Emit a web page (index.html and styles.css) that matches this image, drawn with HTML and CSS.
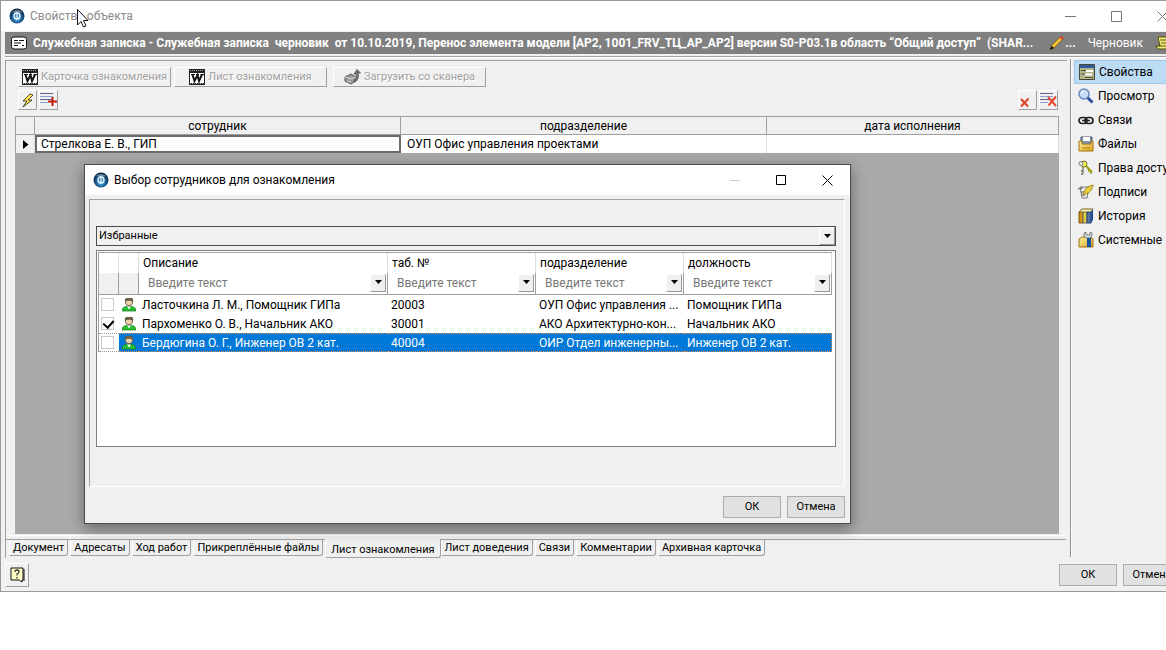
FILE: index.html
```html
<!DOCTYPE html>
<html lang="ru">
<head>
<meta charset="utf-8">
<title>Свойства объекта</title>
<link rel="stylesheet" href="styles.css">
</head>
<body>
<svg class="defs" width="0" height="0" aria-hidden="true">
  <defs>
    <radialGradient id="globe" cx="50%" cy="65%" r="60%">
      <stop offset="0" stop-color="#6fc4f4"/><stop offset=".5" stop-color="#1d639c"/><stop offset="1" stop-color="#0c2238"/>
    </radialGradient>
    <linearGradient id="gold" x1="0" y1="0" x2="1" y2="1">
      <stop offset="0" stop-color="#fff3a0"/><stop offset="1" stop-color="#d9a21c"/>
    </linearGradient>
    <symbol id="i-app" viewBox="0 0 16 16">
      <circle cx="8" cy="8" r="7.5" fill="url(#globe)"/>
      <path d="M3 4Q8 0 13 4Q8 6 3 4" fill="#8ea9c0" opacity=".7"/>
      <circle cx="8" cy="8" r="3" fill="none" stroke="#e4f5ff" stroke-width="1.4"/>
      <path d="M8 4.500v7" stroke="#e4f5ff" stroke-width="1.2"/>
    </symbol>
    <symbol id="i-word" viewBox="0 0 16 16">
      <path d="M0 0h16v16H0z" fill="#222"/>
      <path d="M1 4h14v10H1z" fill="#fff"/>
      <path d="M1 1.500h14M1 14.500h14" stroke="#aaa" stroke-dasharray="1 1"/>
      <path d="M2 5.500h4M7 5.500h3M11.500 5.500H15" stroke="#111"/>
      <path d="M3.500 5.500L5.500 12 8.500 6l1.500 6 3-6.500" fill="none" stroke="#111" stroke-width="2"/>
    </symbol>
    <symbol id="i-person" viewBox="0 0 14 15">
      <path d="M0 14c0-3 2-4 4-4.500h6c2 .5 4 1.500 4 4.500z" fill="#22c02c" stroke="#187a20" stroke-width=".7"/>
      <path d="M5 9.500l2 3 2-3" fill="#fff"/>
      <circle cx="7" cy="5" r="3.700" fill="#ecd3ac" stroke="#594b35" stroke-width=".8"/>
      <path d="M3 4.500C2 1 5 .5 7 1.500 10-.5 12 2 11 5 9 4 7 3 3 4.500z" fill="#6c6048"/>
    </symbol>
    <symbol id="i-down" viewBox="0 0 8 5"><path d="M1 0h7L4.500 4z" fill="#000"/></symbol>
    <symbol id="i-lines" viewBox="0 0 16 16">
      <path d="M0 1.500h13M0 7.500h13" stroke="#5f6488"/><path d="M0 4.500h13M0 10.500h8" stroke="#8da0cf"/>
    </symbol>
  </defs>
</svg>

<main class="window">
  <header class="titlebar">
    <svg class="app-icon"><use href="#i-app"/></svg>
    <h1 class="titlebar-text">Свойства объекта</h1>
    <div class="win-controls">
      <button type="button" aria-label="Свернуть"><svg width="11" height="11"><path d="M0 5.500h11" stroke="#777"/></svg></button>
      <button type="button" aria-label="Развернуть"><svg width="11" height="11"><path d="M.5.5h10v10H.5z" fill="none" stroke="#777"/></svg></button>
      <button type="button" aria-label="Закрыть"><svg width="11" height="11"><path d="M.5.5l10 10M10.500.5l-10 10" stroke="#777"/></svg></button>
    </div>
    <svg class="pointer" width="12" height="19" aria-hidden="true"><path d="M.5.5v15.500l3.500-3.500 2.500 5.500 2.500-1-2.500-5.500h4.500z" fill="#fff" stroke="#111"/></svg>
  </header>

  <div class="docbar">
    <svg width="16" height="14" viewBox="0 0 16 14"><rect x=".5" y="1" width="15" height="12" rx="2.500" fill="#fff" stroke="#111"/><path d="M3 4.500h4M8 4.500h5M3 7h7M3 9.500h4M11 9.500h2" stroke="#111"/></svg>
    <strong class="docbar-title">Служебная записка - Служебная записка&nbsp; черновик&nbsp; от 10.10.2019, Перенос элемента модели [АР2, 1001_FRV_ТЦ_АР_АР2] версии S0-P03.1в область “Общий доступ”&nbsp; (SHAR...</strong>
    <span class="docbar-edit"><svg width="16" height="16" viewBox="0 0 16 16"><path d="M1 15l2-5L12 1l3 2-9 9z" fill="#f1c232" stroke="#6b4b12" stroke-width=".8"/><path d="M12 1l3 2-2 2-3-2z" fill="#d55044"/><path d="M1 15l1.500-4L5 13z" fill="#111"/></svg>...</span>
    <span class="docbar-state">Черновик</span>
    <svg class="docbar-scroll" width="16" height="14" viewBox="0 0 16 14"><path d="M3 1h10v9h2v3H3l-2-3h4z" fill="#f4ee73" stroke="#544f12"/><path d="M5 4h6M6 7h5M4 10h8" stroke="#544f12"/></svg>
  </div>

  <div class="workspace">
    <section class="pane">
      <div class="toolbar">
        <button class="tool wide" type="button" disabled><svg width="16" height="16"><use href="#i-word"/></svg><span>Карточка ознакомления</span></button>
        <button class="tool wide" type="button" disabled><svg width="16" height="16"><use href="#i-word"/></svg><span>Лист ознакомления</span></button>
        <button class="tool wide scan" type="button" disabled><svg width="17" height="16" viewBox="0 0 17 16"><path d="M1 8l6-3 5 3v4l-5 3-6-3z" fill="#999" stroke="#555"/><path d="M1 8l6 2 5-2M3 12l4 1" fill="none" stroke="#ddd"/><path d="M10 11c3-1 3-3 2-6h-2l3-4.500L16.500 4H14c1 4 0 7-3 9z" fill="#777" stroke="#444" stroke-width=".7"/></svg><span>Загрузить со сканера</span></button>
      </div>
      <div class="toolbar small">
        <button class="tool" type="button" aria-label="Обновить"><svg width="14" height="15" viewBox="0 0 14 15"><path d="M9 1L2 8h4l-4 6 9-7H7l5-5z" fill="#ffe75c" stroke="#3e3819" stroke-width=".9"/></svg></button>
        <button class="tool" type="button" aria-label="Добавить"><svg width="17" height="16" viewBox="0 0 17 16"><use href="#i-lines" width="16" height="16"/><path d="M12.500 5v9M8 9.500h9" stroke="#c41808" stroke-width="2"/></svg></button>
        <span class="spacer"></span>
        <button class="tool" type="button" aria-label="Удалить"><svg width="17" height="16" viewBox="0 0 17 16"><path d="M2 7l7 7.500M9.500 6.500L2 14.500" stroke="#dd4325" stroke-width="2"/></svg></button>
        <button class="tool" type="button" aria-label="Удалить все"><svg width="17" height="16" viewBox="0 0 17 16"><use href="#i-lines" width="16" height="16"/><path d="M8 5l8 9M16 4.500l-7.500 9" stroke="#e64b2d" stroke-width="2"/></svg></button>
      </div>
      <div class="grid-area">
        <table class="grid">
          <colgroup><col class="c-mark"><col class="c-main"><col class="c-main"><col></colgroup>
          <thead><tr><th></th><th>сотрудник</th><th>подразделение</th><th>дата исполнения</th></tr></thead>
          <tbody><tr><td class="mark"><svg width="6" height="9"><path d="M0 0v9l5.500-4.500z"/></svg></td><td class="focus">Стрелкова Е. В., ГИП</td><td>ОУП Офис управления проектами</td><td></td></tr></tbody>
        </table>
      </div>
      <nav class="tabs">
        <button type="button">Документ</button><button type="button">Адресаты</button><button type="button">Ход работ</button><button type="button">Прикреплённые файлы</button><button type="button" class="active">Лист ознакомления</button><button type="button">Лист доведения</button><button type="button">Связи</button><button type="button">Комментарии</button><button type="button">Архивная карточка</button>
      </nav>
    </section>

    <nav class="side">
      <a class="current" href="#props"><svg viewBox="0 0 16 16"><path d="M.5.5h15v15H.5z" fill="#b4b489" stroke="#46463a"/><path d="M1 2.500h14" stroke="#315e9b" stroke-width="3"/><path d="M2 6.500h5M2 10h4M6 13.500h8" stroke="#55553f"/><path d="M7 7h7M6 10.500h7" stroke="#fff" stroke-width="2"/></svg>Свойства</a>
      <a href="#view"><svg viewBox="0 0 16 16"><path d="M9.500 9.500l5 5" stroke="#2b50a0" stroke-width="3"/><circle cx="6" cy="6" r="5" fill="#c8dcf8" stroke="#6682bc" stroke-width="1.400"/><path d="M3 6q0-3 3-3" stroke="#fff" fill="none"/></svg>Просмотр</a>
      <a href="#links"><svg viewBox="0 0 16 16"><rect x="1" y="5.500" width="8" height="6" rx="3" fill="none" stroke="#222" stroke-width="1.700"/><rect x="7" y="5.500" width="8" height="6" rx="3" fill="none" stroke="#222" stroke-width="1.700"/><path d="M4 8.500h8" stroke="#222" stroke-width="1.500"/></svg>Связи</a>
      <a href="#files"><svg viewBox="0 0 16 16"><path d="M3 1h11v9H3z" fill="#7993b7" stroke="#465269"/><path d="M5 1h7v4H5z" fill="#fff"/><path d="M1 5h3v3h9V5h2v10H1z" fill="url(#gold)" stroke="#a37412"/><path d="M4 12h8" stroke="#b78112"/></svg>Файлы</a>
      <a href="#rights"><svg viewBox="0 0 16 16"><path d="M8 6l6 6M12 10l-2 1M14 12l-2 1" stroke="#a1a018" stroke-width="2"/><path d="M5 6v8M5 11H3M5 14H3" stroke="#77776a" stroke-width="1.300"/><circle cx="6" cy="4" r="3" fill="#f2ee68" stroke="#77701e"/><circle cx="3" cy="3.500" r="2" fill="#eee" stroke="#777"/></svg>Права доступа</a>
      <a href="#signs"><svg viewBox="0 0 16 16"><path d="M2 3h9l-2 11H4z" fill="#eee" stroke="#777"/><path d="M0 5l5-1M3 8h5M4 11h3" stroke="#555"/><path d="M5 11c1-6 5-9 10-10-1 5-3 8-8 9z" fill="#e6cd3c" stroke="#8b751b" stroke-width=".8"/></svg>Подписи</a>
      <a href="#history"><svg viewBox="0 0 16 16"><path d="M1 4l3-3h11l-2 3" fill="#fff5b0" stroke="#776021"/><path d="M1 4h4v11H1z" fill="#d39614" stroke="#765211"/><path d="M5 4h4v11H5z" fill="#e4ce42" stroke="#666"/><path d="M9 4h4v11H9z" fill="#5174a5" stroke="#293f65"/><path d="M13 4l2-3v11l-2 3z" fill="#1c4d9b"/></svg>История</a>
      <a href="#system"><svg viewBox="0 0 16 16"><path d="M1 7l3-2h9l2 2v8H1z" fill="url(#gold)" stroke="#9d721a"/><path d="M6 1l2-1v3h4V0l2 1v3l-2 2H8L6 4z" fill="#d9e2e8" stroke="#555" stroke-width=".7"/><path d="M9 6h4v9H9z" fill="#1554a5"/></svg>Системные</a>
    </nav>
  </div>

  <footer class="footer">
    <button class="help" type="button" aria-label="Справка"><svg width="15" height="16" viewBox="0 0 15 16"><path d="M1 1h12v12h-1v2l-3-2H1z" fill="#ffffc5" stroke="#111"/><path d="M14 2v12" stroke="#111"/><path d="M5 5q0-2 2-2t2 2q0 1-2 2v1.500M7 10v1.500" fill="none" stroke="#333" stroke-width="1.300"/></svg></button>
    <span class="spacer"></span>
    <button class="btn" type="button">ОК</button>
    <button class="btn" type="button">Отмена</button>
  </footer>

  <section class="dialog" role="dialog" aria-labelledby="dlg-title">
    <header class="dialog-title">
      <svg class="app-icon"><use href="#i-app"/></svg>
      <h2 id="dlg-title">Выбор сотрудников для ознакомления</h2>
      <div class="win-controls">
        <button type="button" aria-label="Свернуть" disabled><svg width="11" height="11"><path d="M0 5.500h10" stroke="#ccc"/></svg></button>
        <button type="button" aria-label="Развернуть"><svg width="11" height="11"><path d="M.5.5h9v9H.5z" fill="none" stroke="#000"/></svg></button>
        <button type="button" aria-label="Закрыть"><svg width="11" height="11"><path d="M.5.5l10 10M10.500.5l-10 10" stroke="#000"/></svg></button>
      </div>
    </header>
    <div class="dialog-body">
      <div class="combo">
        <select aria-label="Список сотрудников"><option>Избранные</option></select>
        <span class="drop"><svg width="8" height="5"><use href="#i-down"/></svg></span>
      </div>
      <div class="list">
        <table class="people">
          <colgroup><col class="p-check"><col class="p-icon"><col class="p-name"><col class="p-num"><col class="p-num"><col class="p-num"></colgroup>
          <thead>
            <tr class="heads"><th></th><th></th><th>Описание</th><th>таб. №</th><th>подразделение</th><th>должность</th></tr>
            <tr class="filters">
              <td class="blank"></td><td class="blank"></td>
              <td><div class="filter"><input type="text" aria-label="Описание" placeholder="Введите текст"><button class="drop" type="button" aria-label="Выбрать описание"><svg width="8" height="5"><use href="#i-down"/></svg></button></div></td>
              <td><div class="filter"><input type="text" aria-label="таб. №" placeholder="Введите текст"><button class="drop" type="button" aria-label="Выбрать номер"><svg width="8" height="5"><use href="#i-down"/></svg></button></div></td>
              <td><div class="filter"><input type="text" aria-label="подразделение" placeholder="Введите текст"><button class="drop" type="button" aria-label="Выбрать подразделение"><svg width="8" height="5"><use href="#i-down"/></svg></button></div></td>
              <td><div class="filter"><input type="text" aria-label="должность" placeholder="Введите текст"><button class="drop" type="button" aria-label="Выбрать должность"><svg width="8" height="5"><use href="#i-down"/></svg></button></div></td>
            </tr>
          </thead>
          <tbody>
            <tr><td class="check"><input type="checkbox" aria-label="Ласточкина Л. М."></td><td class="face"><svg width="14" height="15"><use href="#i-person"/></svg></td><td>Ласточкина Л. М., Помощник ГИПа</td><td>20003</td><td>ОУП Офис управления ...</td><td>Помощник ГИПа</td></tr>
            <tr><td class="check"><input type="checkbox" aria-label="Пархоменко О. В." checked></td><td class="face"><svg width="14" height="15"><use href="#i-person"/></svg></td><td>Пархоменко О. В., Начальник АКО</td><td>30001</td><td>АКО Архитектурно-кон...</td><td>Начальник АКО</td></tr>
            <tr class="selected"><td class="check"><input type="checkbox" aria-label="Бердюгина О. Г."></td><td class="face"><svg width="14" height="15"><use href="#i-person"/></svg></td><td>Бердюгина О. Г., Инженер ОВ 2 кат.</td><td>40004</td><td>ОИР Отдел инженерны...</td><td>Инженер ОВ 2 кат.</td></tr>
          </tbody>
        </table>
      </div>
    </div>
    <footer class="dialog-foot">
      <button class="btn" type="button">ОК</button>
      <button class="btn" type="button">Отмена</button>
    </footer>
  </section>
</main>
</body>
</html>
```
FILE: styles.css
```css
* { box-sizing: border-box; }
body { margin: 0; background: #fff; color: #000; font: 12px/16px Roboto, "Noto Sans", sans-serif; overflow-x: hidden; }
button, input, select { font: inherit; color: inherit; margin: 0; padding: 0; border-radius: 0; }
h1, h2 { margin: 0; font-size: 12px; font-weight: 400; }
svg { display: block; flex: none; }
.defs { position: absolute; }
.spacer { flex: 1; }

.window { position: relative; overflow: hidden; background: #f0f0f0; border: solid #999; border-width: 1px 0 1px 1px; }
.titlebar { position: relative; display: flex; align-items: center; height: 30px; padding-left: 8px; gap: 5px; background: #fff; }
.titlebar-text { color: #8b8b8b; }
.app-icon { width: 16px; height: 16px; }
.win-controls { display: flex; margin-left: auto; }
.win-controls button { display: flex; justify-content: center; width: 46px; border: 0; background: none; }
.titlebar .win-controls { margin-right: -19px; }
.pointer { position: absolute; left: 76px; top: 8px; }

.docbar { display: flex; align-items: center; height: 22px; margin: 1px 0 2px 4px; padding-left: 6px; background: #808080; color: #fff; white-space: nowrap; }
.docbar-title { margin: 0 16px 0 6px; }
.docbar-edit { display: flex; font-weight: 700; }
.docbar-state { margin-left: auto; margin-right: 12px; }
.docbar-scroll { margin-right: -5px; }

.workspace { display: flex; margin-left: 4px; padding-top: 2px; border-top: 1px solid #a0a0a0; box-shadow: inset 0 1px #fff; }
.pane { flex: 1; min-width: 0; margin: 1px 3px 0 0; border: solid #a0a0a0; border-width: 1px 0 0 1px; padding-top: 6px; }
.toolbar { display: flex; gap: 3px; padding: 0 9px 0 12px; margin-bottom: 3px; }
.toolbar.small { margin-bottom: 6px; gap: 2px; }
.tool { display: flex; align-items: center; justify-content: center; gap: 3px; width: 19px; height: 20px; border: 1px solid; border-color: #fff #a0a0a0 #a0a0a0 #fff; background: #f0f0f0; white-space: nowrap; }
.tool.wide { width: 153px; color: #a0a0a0; text-shadow: 1px 1px #fff; font-size: 11px; }
.tool.scan { margin-left: 3px; }
.grid-area { min-height: 418px; margin: 0 8px 0 9px; background: #a9a9a9; }
.grid { width: 100%; table-layout: fixed; border-collapse: separate; border-spacing: 0; border: solid #a0a0a0; border-width: 1px 0 0 1px; }
.c-mark { width: 19px; }
.c-main { width: 366px; }
.grid th { height: 18px; padding: 0; font-weight: 400; line-height: 16px; background: #f0f0f0; border: solid #a0a0a0; border-width: 0 1px 1px 0; }
.grid td { height: 18px; padding: 0 6px; background: #fff; border-right: 1px solid #ddd; line-height: 16px; }
.grid .mark { padding: 0 0 0 7px; background: #f0f0f0; }
.grid .focus { padding: 0 4px; border: 2px solid #6b6b6b; line-height: 14px; }

.tabs { display: flex; align-items: flex-start; height: 23px; margin-top: 1px; margin-right: 1px; border-top: 1px solid #fff; line-height: 16px; background: linear-gradient(#f0f0f0 3px, #a0a0a0 3px, #a0a0a0 4px, #f0f0f0 4px); padding-top: 4px; padding-left: 3px; }
.tabs button { height: 16px; margin-right: 2px; padding: 0 3px; border: solid; border-width: 0 1px 1px; border-color: #a0a0a0 #a0a0a0 #a0a0a0 #fff; border-bottom-right-radius: 3px; background: #f0f0f0; white-space: nowrap; font-size: 11px; }
.tabs .active { height: 19px; margin: -1px 0 0; padding: 3px 5px 0; }

.side { width: 96px; flex: none; margin-bottom: 1px; padding: 1px 0 0 3px; border-left: 1px solid #909090; box-shadow: inset 1px 0 #fff; overflow: hidden; }
.side a { display: flex; align-items: center; gap: 4px; height: 24px; padding-left: 4px; color: #000; text-decoration: none; white-space: nowrap; }
.side svg { width: 16px; height: 16px; }
.side .current { background: #bcdcf4; border: solid #99caee; border-width: 1px 0 1px 1px; }

.footer { display: flex; align-items: center; gap: 6px; margin: 5px -15px 4px 4px; }
.help { display: flex; align-items: center; justify-content: center; width: 24px; height: 24px; border: 1px solid; border-color: #fff #a0a0a0 #a0a0a0 #fff; background: #f0f0f0; }
.btn { width: 58px; height: 22px; border: 1px solid #adadad; background: #e1e1e1; font-size: 11px; line-height: 16px; }

.dialog { position: absolute; left: 83px; top: 163px; width: 767px; border: 1px solid #4b4b4b; background: #f0f0f0; box-shadow: 0 4px 14px rgba(0, 0, 0, .4); }
.dialog-title { display: flex; align-items: center; gap: 5px; height: 30px; padding-left: 8px; background: #fff; }
.dialog-body { margin: 4px 5px 0 4px; padding: 26px 8px 39px 6px; border: 1px solid; border-color: #a0a0a0 #fff #fff #a0a0a0; }
.combo { position: relative; display: flex; height: 20px; border: 1px solid #4b4b4b; }
.combo select { width: 100%; appearance: none; border: 0; background: #f0f0f0; padding-left: 2px; font-size: 11px; }
.drop { display: flex; align-items: center; justify-content: center; width: 16px; height: 18px; flex: none; border: 1px solid; border-color: #fff #999 #999 #fff; background: #f0f0f0; }
.combo .drop { position: absolute; right: 0; top: 0; pointer-events: none; }
.list { min-height: 197px; margin-top: 4px; padding: 1px 3px 1px 1px; border: 1px solid #808080; background: #fff; }
.people { width: 100%; table-layout: fixed; border-collapse: separate; border-spacing: 0; border: solid #a0a0a0; border-width: 1px 0 0 1px; }
.p-check { width: 20px; }
.p-icon { width: 20px; }
.p-name { width: 249px; }
.people th { height: 20px; padding: 0 4px; font-weight: 400; text-align: left; line-height: 16px; border-right: 1px solid #ddd; }
.people td { height: 19px; padding: 0 3px; line-height: 18px; white-space: nowrap; overflow: hidden; }
.people .filters td { height: 22px; padding: 0; border: solid #a0a0a0; border-width: 0 1px 1px 0; }
.people .filters .blank { background: #f0f0f0; }
.filter { display: flex; height: 20px; padding: 0 1px 2px 9px; }
.filter input { flex: 1; min-width: 0; border: 0; outline: 0; background: transparent; }
.filter input::placeholder { color: #777; opacity: 1; }
.people .check { padding: 0 0 0 2px; }
.check input { position: relative; display: block; appearance: none; width: 13px; height: 13px; border: 1px solid #c9c9d0; background: #fff; }
.check input:checked::after { content: ""; position: absolute; left: 3px; top: 0; width: 5px; height: 8px; border: solid #000; border-width: 0 2px 2px 0; transform: rotate(42deg); }
.people .face { padding: 0 3px; }
.selected td { background: #0078d7; color: #fff; border: dotted #d49053; border-width: 1px 0; line-height: 16px; }
.selected td.check { background: #fff; border-color: #999; }
.selected td:last-child { border-right-width: 1px; }
.dialog-foot { display: flex; justify-content: flex-end; gap: 6px; padding: 9px 5px 5px; }
```
